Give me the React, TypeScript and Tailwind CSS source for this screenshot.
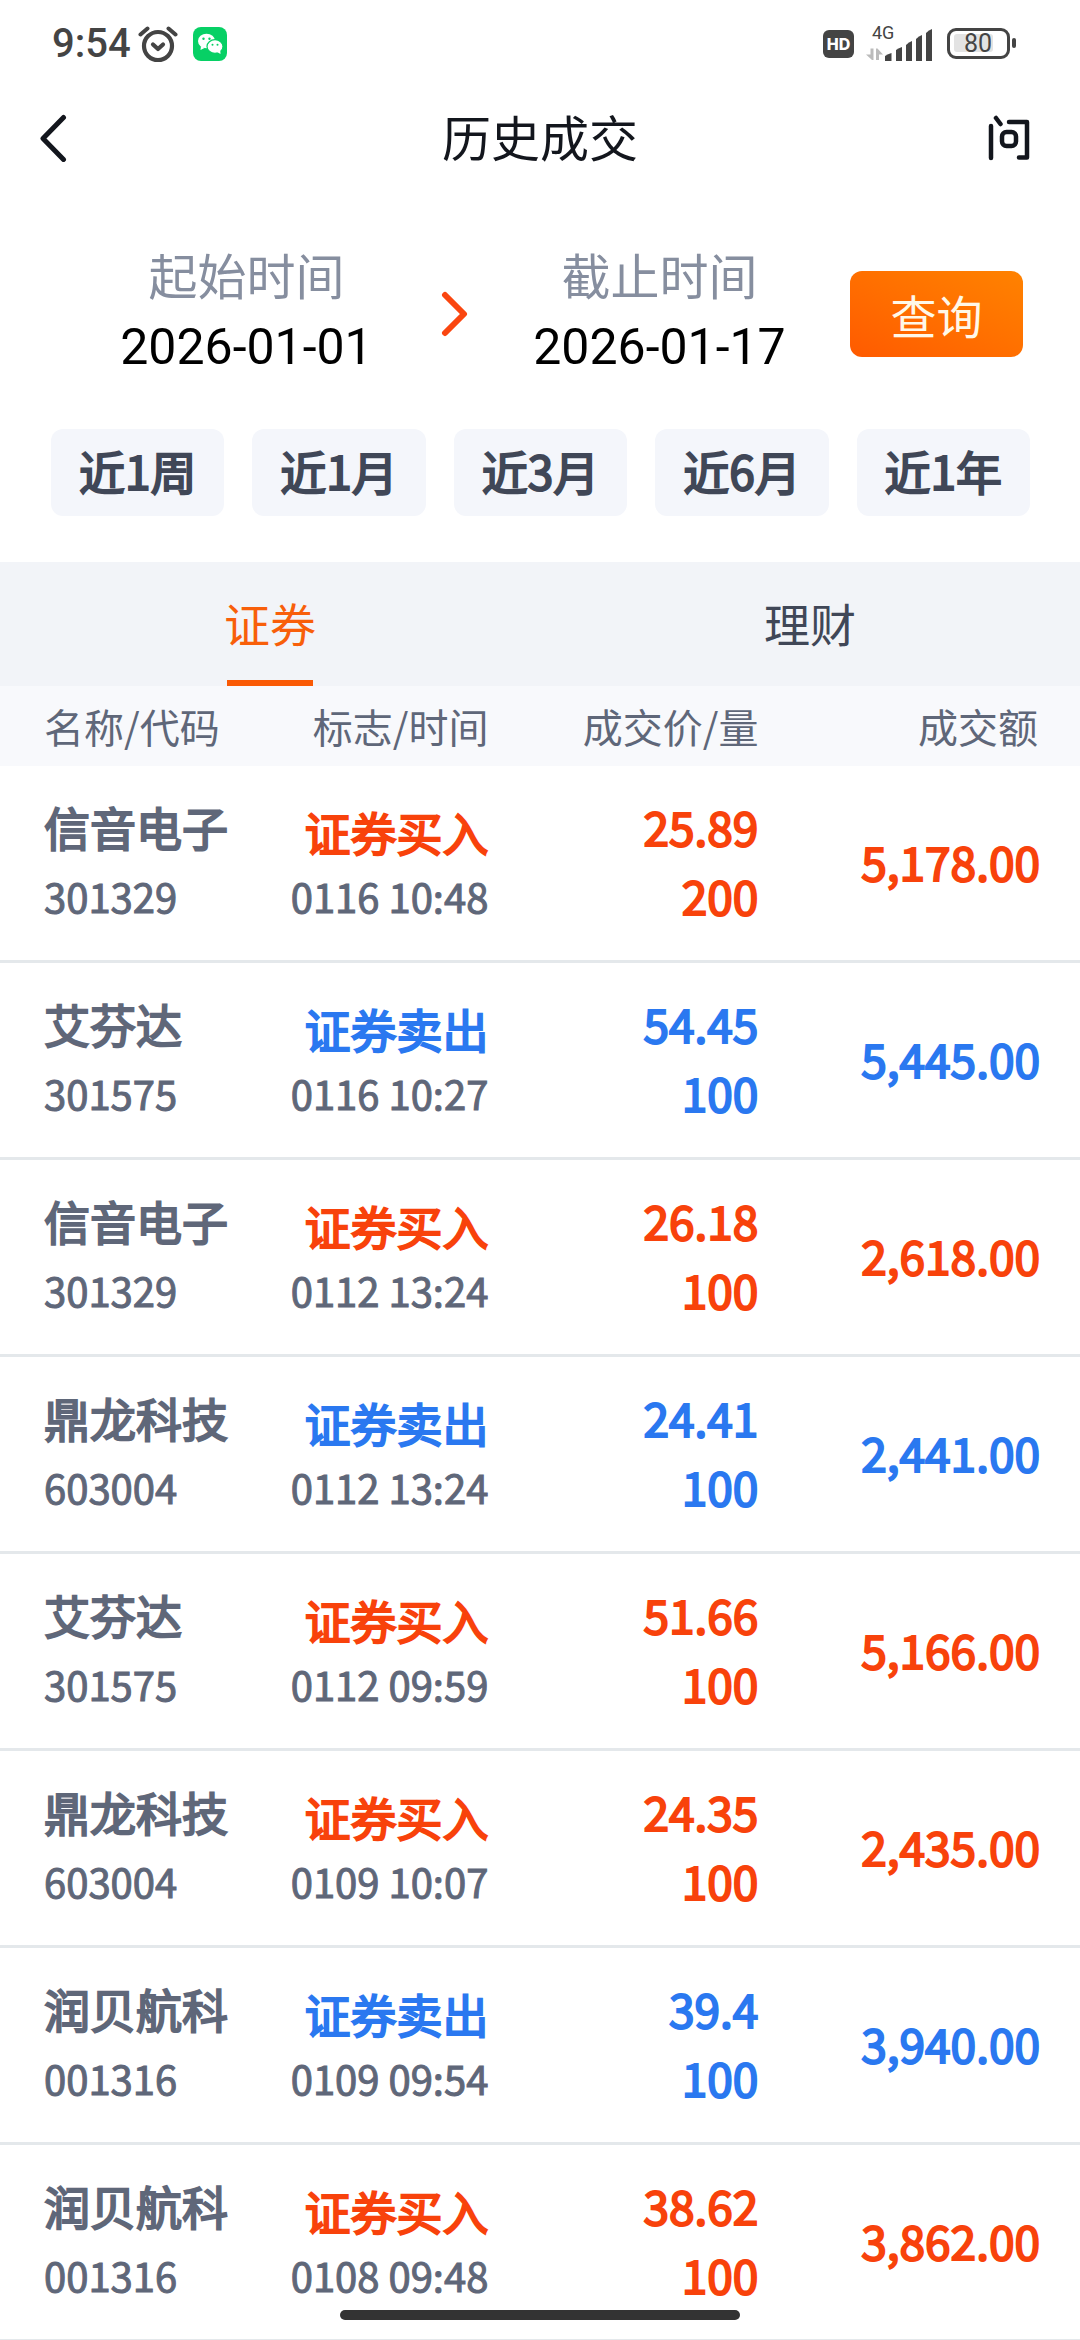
import { useState } from "react";

type Trade = {
  name: string;
  code: string;
  side: "buy" | "sell";
  time: string;
  price: string;
  volume: string;
  amount: string;
};

const trades: Trade[] = [
  { name: "信音电子", code: "301329", side: "buy", time: "0116 10:48", price: "25.89", volume: "200", amount: "5,178.00" },
  { name: "艾芬达", code: "301575", side: "sell", time: "0116 10:27", price: "54.45", volume: "100", amount: "5,445.00" },
  { name: "信音电子", code: "301329", side: "buy", time: "0112 13:24", price: "26.18", volume: "100", amount: "2,618.00" },
  { name: "鼎龙科技", code: "603004", side: "sell", time: "0112 13:24", price: "24.41", volume: "100", amount: "2,441.00" },
  { name: "艾芬达", code: "301575", side: "buy", time: "0112 09:59", price: "51.66", volume: "100", amount: "5,166.00" },
  { name: "鼎龙科技", code: "603004", side: "buy", time: "0109 10:07", price: "24.35", volume: "100", amount: "2,435.00" },
  { name: "润贝航科", code: "001316", side: "sell", time: "0109 09:54", price: "39.4", volume: "100", amount: "3,940.00" },
  { name: "润贝航科", code: "001316", side: "buy", time: "0108 09:48", price: "38.62", volume: "100", amount: "3,862.00" },
];

const ranges = ["近1周", "近1月", "近3月", "近6月", "近1年"];
const tabs = ["证券", "理财"];

function AlarmIcon() {
  return (
    <svg width="40" height="38" viewBox="0 0 40 38" fill="none" stroke="#444" strokeWidth="4.2" strokeLinecap="round" aria-hidden="true">
      <circle cx="20" cy="21" r="14" />
      <path d="M15 19.5l5 4.5 5-4.5" strokeLinejoin="round" />
      <path d="M2.5 9.500L9.500 3.500M37.500 9.500L30.500 3.500" strokeWidth="4" />
    </svg>
  );
}

function WeChatIcon() {
  return (
    <svg width="34" height="34" viewBox="0 0 34 34" aria-hidden="true">
      <rect width="34" height="34" rx="8" fill="#07d065" />
      <ellipse cx="13.500" cy="14" rx="8.500" ry="7.300" fill="#fff" />
      <path d="M8 19l-.5 4 4-2z" fill="#fff" />
      <ellipse cx="22" cy="19.500" rx="8" ry="6.800" fill="#fff" stroke="#07d065" strokeWidth="1.200" />
      <path d="M24 25l3.500 2-.3-4z" fill="#fff" />
      <g fill="#07d065">
        <circle cx="10.500" cy="11.700" r="1.200" />
        <circle cx="16.500" cy="11.700" r="1.200" />
        <circle cx="19.500" cy="17.700" r="1" />
        <circle cx="24.500" cy="17.700" r="1" />
      </g>
    </svg>
  );
}

function SignalIcon() {
  return (
    <svg width="68" height="48" viewBox="0 -6 68 48" aria-hidden="true">
      <text x="6" y="13" fontSize="18" fontFamily="Roboto, sans-serif" fill="#444">4G</text>
      <g fill="#bbb">
        <path d="M4.500 22.500H7.500V34H6L0 28.500H4.500z" />
        <path d="M10 22.500h1.500l5.500 6h-4V34h-3z" />
      </g>
      <g fill="#444">
        <path d="M19 30q3-2 6.500-3v8h-6.500z" />
        <path d="M30 24q3-2 6-3v14h-6z" />
        <path d="M40 19q3-3 6-4v20h-6z" />
        <path d="M50 13q3-3 6-4v26h-6z" />
        <path d="M60 7q3-3 6-4v32h-6z" />
      </g>
    </svg>
  );
}

function Battery() {
  return (
    <svg width="70" height="32" viewBox="0 0 70 32" aria-hidden="true">
      <rect x="1.500" y="1.500" width="60" height="28" rx="7.500" fill="none" stroke="#444" strokeWidth="3" />
      <rect x="7" y="6" width="39" height="18" rx="3" fill="#e3e3e3" />
      <rect x="65" y="10" width="4" height="10" rx="2" fill="#444" />
      <text x="31" y="24" textAnchor="middle" fontSize="25" fontFamily="Roboto, sans-serif" fill="#444">80</text>
    </svg>
  );
}

function StatusBar() {
  return (
    <div className="flex h-[88px] shrink-0 items-center justify-between pl-[52px] pr-[63px] text-[#444]">
      <div className="flex items-center">
        <span className="w-[86px] font-[Roboto,sans-serif] text-[40px] leading-[48px] font-medium">9:54</span>
        <AlarmIcon />
        <span className="ml-[15px]"><WeChatIcon /></span>
      </div>
      <div className="flex items-center">
        <span className="flex h-7 w-[31px] items-center justify-center rounded-md bg-[#444] font-[Inter,sans-serif] text-[16px] font-extrabold text-white">HD</span>
        <span className="ml-3"><SignalIcon /></span>
        <span className="ml-[13px]"><Battery /></span>
      </div>
    </div>
  );
}

function TitleBar() {
  return (
    <header className="flex h-[100px] shrink-0 items-center justify-between px-8 text-[#13161d]">
      <button type="button" aria-label="返回" className="w-[60px]">
        <svg width="44" height="48" viewBox="0 0 44 48" fill="none" stroke="currentColor" strokeWidth="5" strokeLinecap="round" strokeLinejoin="round">
          <path d="M31.500 3.500L11 24.500l20.500 21" />
        </svg>
      </button>
      <h1 className="pb-1 text-[49px] leading-[72px]">历史成交</h1>
      <button type="button" aria-label="问">
        <svg width="60" height="48" viewBox="0 0 60 48" fill="none" stroke="currentColor" strokeWidth="4.500" strokeLinecap="round" strokeLinejoin="round">
          <path d="M3 12v32M8 4l4.500 6M21 8h18v35.500h-8" />
          <rect x="14" y="18" width="14" height="14" rx="4.500" />
        </svg>
      </button>
    </header>
  );
}

function DateField({ label, value }: { label: string; value: string }) {
  return (
    <button type="button" className="flex flex-1 flex-col items-center">
      <span className="text-[49px] leading-[66px] text-[#868e9f]">{label}</span>
      <span className="font-[Roboto,sans-serif] text-[50px] leading-[80px] text-black">{value}</span>
    </button>
  );
}

export default function App() {
  const [tab, setTab] = useState("证券");
  return (
    <div className="relative flex h-screen flex-col overflow-hidden bg-white font-['Noto_Sans_CJK_SC',sans-serif]">
      <StatusBar />
      <TitleBar />

      <section className="flex shrink-0 items-center pl-14 pr-[57px] pt-[53px]">
        <DateField label="起始时间" value="2026-01-01" />
        <svg className="ml-1" width="28" height="46" viewBox="0 0 28 46" fill="none" stroke="#fa4610" strokeWidth="6" strokeLinecap="round" strokeLinejoin="round" aria-hidden="true">
          <path d="M4 4L23 23 4 42" />
        </svg>
        <DateField label="截止时间" value="2026-01-17" />
        <button type="button" className="h-[86px] w-[173px] rounded-xl bg-linear-to-tr from-[#ff5a00] to-[#ff8200] text-[46px] text-[#fff8e8]">
          查询
        </button>
      </section>

      <div className="grid shrink-0 grid-cols-5 gap-7 pl-[51px] pr-[50px] pb-[46px] pt-[42px]">
        {ranges.map((r) => (
          <button
            key={r}
            type="button"
            className="h-[87px] rounded-xl bg-[#f4f6fb] pb-1 text-[46px] text-[#404757] [-webkit-text-stroke:2px_currentColor]"
          >
            {r}
          </button>
        ))}
      </div>

      <div role="tablist" className="flex h-[124px] shrink-0 bg-[#f2f4f8]">
        {tabs.map((t) => (
          <button
            key={t}
            type="button"
            role="tab"
            aria-selected={tab === t}
            onClick={() => setTab(t)}
            className={`flex flex-1 flex-col items-center justify-between pt-[26px] text-[46px] leading-[68px] ${tab === t ? "text-[#f85f0a]" : "text-[#404757]"}`}
          >
            {t}
            <span className={`h-1.5 w-[86px] ${tab === t ? "bg-[#fa5a05]" : "bg-transparent"}`} />
          </button>
        ))}
      </div>

      <div className="min-h-0 flex-1 overflow-y-auto [scrollbar-width:none]">
        <table className="w-full table-fixed border-separate border-spacing-0">
          <colgroup>
            <col className="w-[240px]" />
            <col className="w-[23%]" />
            <col className="w-[25%]" />
            <col />
          </colgroup>
          <thead>
            <tr className="h-20 bg-[#f8f9fc] text-[40px] leading-[60px] text-[#5f6779]">
              <th className="pl-11 text-left font-normal">名称/代码</th>
              <th className="text-right font-normal">标志/时间</th>
              <th className="text-right font-normal">成交价/量</th>
              <th className="pr-[42px] text-right font-normal">成交额</th>
            </tr>
          </thead>
          <tbody>
            {trades.map((t, i) => {
              const tone = t.side === "buy" ? "text-[#f8420b]" : "text-[#2a78f0]";
              return (
                <tr
                  key={i}
                  className="h-[197px] text-[#5f6779] [-webkit-text-stroke:2px_currentColor] [&>td]:border-b-3 [&>td]:border-[#e4e8eb] [&>td]:pb-1"
                >
                  <td className="pl-11">
                    <div className="text-[46px] leading-[70px]">{t.name}</div>
                    <div className="text-[40px] leading-[70px] [-webkit-text-stroke:1px_currentColor]">{t.code}</div>
                  </td>
                  <td className="text-right">
                    <div className={`text-[46px] leading-[70px] ${tone}`}>{t.side === "buy" ? "证券买入" : "证券卖出"}</div>
                    <div className="whitespace-nowrap text-[40px] leading-[60px] [-webkit-text-stroke:1px_currentColor]">{t.time}</div>
                  </td>
                  <td className={`text-right text-[46px] leading-[69px] ${tone}`}>
                    <div>{t.price}</div>
                    <div>{t.volume}</div>
                  </td>
                  <td className={`pr-10 text-right text-[46px] leading-[69px] ${tone}`}>{t.amount}</td>
                </tr>
              );
            })}
          </tbody>
        </table>
      </div>

      <div className="absolute bottom-5 left-1/2 h-2.5 w-[400px] -translate-x-1/2 rounded-full bg-[#333]" />
    </div>
  );
}
